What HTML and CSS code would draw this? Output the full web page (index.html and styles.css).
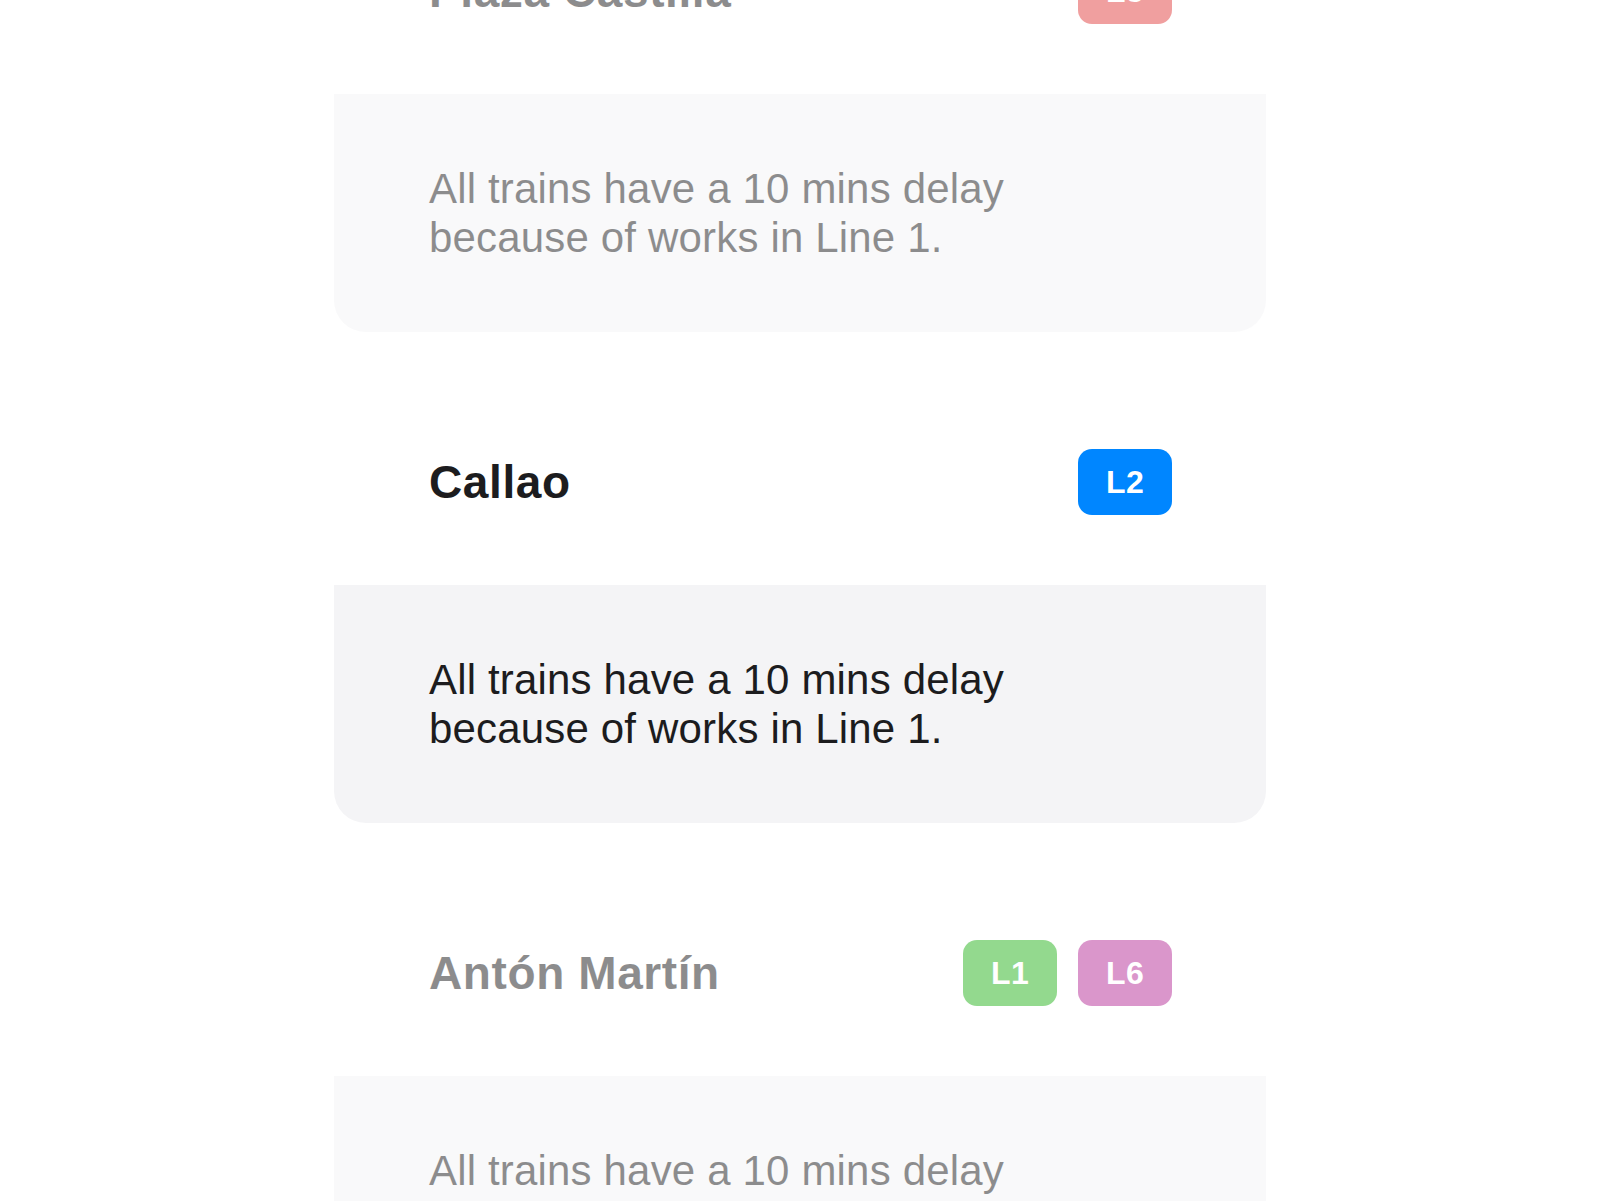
FILE: index.html
```html
<!DOCTYPE html>
<html lang="en">
<head>
<meta charset="utf-8">
<title>Line status</title>
<link rel="stylesheet" href="styles.css">
</head>
<body>
<main class="list">
  <section class="item inactive">
    <div class="item-head">
      <h2 class="station">Plaza Castilla</h2>
      <div class="lines"><span class="badge red">L5</span></div>
    </div>
    <div class="notice">
      <p>All trains have a 10 mins delay<br>because of works in Line 1.</p>
    </div>
  </section>
  <section class="item">
    <div class="item-head">
      <h2 class="station">Callao</h2>
      <div class="lines"><span class="badge blue">L2</span></div>
    </div>
    <div class="notice">
      <p>All trains have a 10 mins delay<br>because of works in Line 1.</p>
    </div>
  </section>
  <section class="item inactive">
    <div class="item-head">
      <h2 class="station">Antón Martín</h2>
      <div class="lines"><span class="badge green">L1</span><span class="badge pink">L6</span></div>
    </div>
    <div class="notice">
      <p>All trains have a 10 mins delay<br>because of works in Line 1.</p>
    </div>
  </section>
</main>
</body>
</html>
```

FILE: styles.css
```css
html, body {
  margin: 0;
  padding: 0;
  background: #ffffff;
  overflow: hidden;
}

body {
  font-family: "Liberation Sans", Arial, Helvetica, sans-serif;
  color: #1c1c1e;
}

.list {
  width: 932px;
  margin: -112px auto 0;
  display: flex;
  flex-direction: column;
  gap: 47px;
}

.item.inactive {
  opacity: 0.5;
}

.item-head {
  display: flex;
  align-items: center;
  justify-content: space-between;
  padding: 70px 94px 70px 95px;
}

.station {
  margin: 0;
  font-size: 46px;
  font-weight: 700;
  line-height: 52px;
  letter-spacing: 0.6px;
  color: #1c1c1e;
}

.lines {
  display: flex;
  gap: 21px;
}

.badge {
  display: flex;
  align-items: center;
  justify-content: center;
  height: 66px;
  padding: 0 28px;
  border-radius: 14px;
  font-size: 32px;
  font-weight: 700;
  letter-spacing: 0.3px;
  color: #ffffff;
}

.badge.red { background: #e24242; }
.badge.blue { background: #0086ff; }
.badge.green { background: #29b51f; }
.badge.pink { background: #b72f99; }

.notice {
  background: #f4f4f6;
  border-radius: 0 0 32px 32px;
  padding: 70px 95px;
}

.notice p {
  margin: 0;
  font-size: 42px;
  line-height: 49px;
  letter-spacing: 0.17px;
  color: #1c1c1e;
}
```
